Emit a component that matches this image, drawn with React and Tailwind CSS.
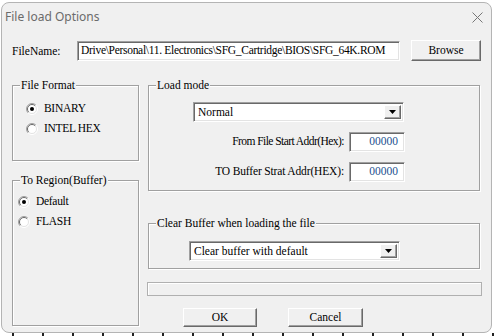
import React from "react";

const serif = "font-['Liberation_Serif',serif] text-[11.5px] text-black";

function Radio({ checked, label }) {
  return (
    <div className="flex items-center h-[20px]">
      <svg width="12" height="12" viewBox="0 0 12 12" className="shrink-0">
        <circle cx="6" cy="6" r="5" fill="#fff" />
        <path d="M2.1 9.9 A5.5 5.5 0 0 1 9.9 2.1" fill="none" stroke="#a0a0a0" strokeWidth="1" />
        <path d="M2.8 9.2 A4.5 4.5 0 0 1 9.2 2.8" fill="none" stroke="#696969" strokeWidth="1" />
        <path d="M2.1 9.9 A5.5 5.5 0 0 0 9.9 2.1" fill="none" stroke="#ffffff" strokeWidth="1" />
        <path d="M2.8 9.2 A4.5 4.5 0 0 0 9.2 2.8" fill="none" stroke="#e3e3e3" strokeWidth="1" />
        {checked && <circle cx="6" cy="6" r="2" fill="#000" />}
      </svg>
      <span className={`${serif} ml-[6px] tracking-[-0.3px]`}>{label}</span>
    </div>
  );
}

function Group({ title, className, children }) {
  return (
    <div
      className={`relative border border-[#a0a0a0] shadow-[inset_1px_1px_0_#fff,1px_1px_0_#fff] ${className}`}
    >
      <span className={`${serif} absolute -top-[9px] left-[7px] bg-[#f0f0f0] px-[1px] leading-[16px]`}>
        {title}
      </span>
      {children}
    </div>
  );
}

function Sunken({ className, children }) {
  return (
    <div
      className={`border border-[#a0a0a0] border-b-white border-r-white bg-white shadow-[inset_1px_1px_0_#696969,inset_-1px_-1px_0_#e3e3e3] ${className}`}
    >
      {children}
    </div>
  );
}

function Button({ label, className }) {
  return (
    <div
      className={`flex items-center justify-center border border-white border-r-[#696969] border-b-[#696969] shadow-[inset_-1px_-1px_0_#a0a0a0] bg-[#f0f0f0] ${serif} ${className}`}
    >
      {label}
    </div>
  );
}

function Combo({ value, className }) {
  return (
    <Sunken className={`flex items-stretch ${className}`}>
      <span className={`${serif} flex-1 pl-[4px] pt-[1px] flex items-center`}>{value}</span>
      <div className="w-[17px] m-[2px] flex items-center justify-center border border-white border-r-[#696969] border-b-[#696969] shadow-[inset_-1px_-1px_0_#a0a0a0] bg-[#f0f0f0]">
        <svg width="7" height="4" viewBox="0 0 7 4">
          <path d="M0 0 H7 L3.5 4 Z" fill="#000" />
        </svg>
      </div>
    </Sunken>
  );
}

function AddrRow({ label, tight }) {
  return (
    <div className="flex items-center justify-end h-[20px]">
      <span className={`${serif} mr-[5px] ${tight}`}>{label}</span>
      <Sunken className="w-[56px] h-[20px] flex items-center justify-end pr-[6px]">
        <span className="font-['Liberation_Serif',serif] text-[11.5px] text-[#23508f]">00000</span>
      </Sunken>
    </div>
  );
}

export default function App() {
  return (
    <div className="w-[496px] h-[336px] bg-white overflow-hidden">
      <div className="ml-[1px] mt-[2px] w-[491px] h-[331px] rounded-[8px] border border-[#b4b4b4] bg-[#f0f0f0] flex flex-col">
        {/* title bar */}
        <div className="h-[28px] flex items-center justify-between pl-[3px] pr-[8px]">
          <span className="font-['Noto_Sans',sans-serif] text-[12px] text-[#6b6b6b]">File load Options</span>
          <svg width="11" height="11" viewBox="0 0 11 11">
            <path d="M0.5 0.5 L10.5 10.5 M10.5 0.5 L0.5 10.5" stroke="#777" strokeWidth="1" />
          </svg>
        </div>

        {/* file name row */}
        <div className="mt-[9px] flex items-center pl-[10px] h-[21px]">
          <span className={`${serif} w-[65px] pt-[3px]`}>FileName:</span>
          <Sunken className="w-[323px] h-[20px] flex items-center pl-[3px] overflow-hidden">
            <span className={`${serif} whitespace-nowrap tracking-[-0.3px]`}>
              Drive\Personal\11. Electronics\SFG_Cartridge\BIOS\SFG_64K.ROM
            </span>
          </Sunken>
          <Button label="Browse" className="ml-[11px] w-[70px] h-[21px]" />
        </div>

        {/* main area */}
        <div className="mt-[24px] flex pl-[10px]">
          <div className="w-[127px] flex flex-col">
            <Group title="File Format" className="h-[76px] pt-[13px] pl-[13px]">
              <Radio checked label="BINARY" />
              <Radio label="INTEL HEX" />
            </Group>
            <Group title="To Region(Buffer)" className="mt-[19px] h-[146px] pt-[11px] pl-[5px]">
              <Radio checked label="Default" />
              <Radio label="FLASH" />
            </Group>
          </div>

          <div className="ml-[9px] w-[332px] flex flex-col">
            <Group title="Load mode" className="h-[106px] pt-[16px] pl-[44px]">
              <Combo value="Normal" className="w-[211px] h-[20px]" />
              <div className="w-[212px] mt-[10px] flex flex-col gap-[10px]">
                <AddrRow label="From File Start Addr(Hex):" tight="tracking-[-0.55px]" />
                <AddrRow label="TO Buffer Strat Addr(HEX):" tight="tracking-[-0.15px]" />
              </div>
            </Group>

            <Group title="Clear Buffer when loading the file" className="mt-[32px] h-[46px] pt-[17px] pl-[40px]">
              <Combo value="Clear buffer with default" className="w-[211px] h-[20px]" />
            </Group>

            <div className="mt-[13px] -ml-[1px] w-[335px] h-[14px] border border-[#b0b0b0] shadow-[inset_1px_1px_0_#fff] bg-[#f0f0f0]" />

            <div className="mt-[12px] flex pl-[35px]">
              <Button label="OK" className="w-[74px] h-[19px]" />
              <Button label="Cancel" className="ml-[31px] w-[75px] h-[19px]" />
            </div>
          </div>
        </div>
      </div>
      <div className="h-[3px] bg-[repeating-linear-gradient(90deg,#fff_0px,#fff_12px,#222_12px,#222_14px,#fff_14px,#fff_30px)]" />
    </div>
  );
}
